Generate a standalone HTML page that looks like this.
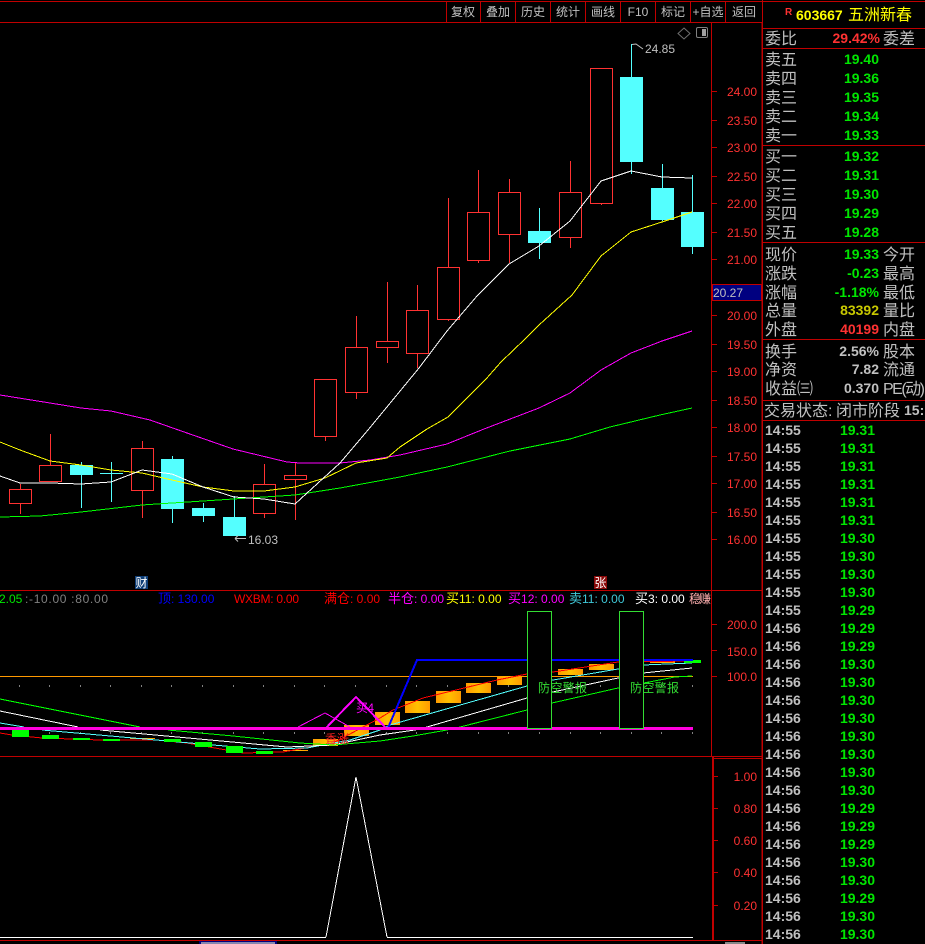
<!DOCTYPE html>
<html><head><meta charset="utf-8">
<style>
html,body{margin:0;padding:0;background:#000;width:925px;height:944px;overflow:hidden}
svg{display:block;font-family:"Liberation Sans","WenQuanYi Zen Hei","Noto Sans CJK SC",sans-serif}
.l{shape-rendering:crispEdges}
.tb{font-size:12px;fill:#c0c0c0;text-anchor:middle}
.ax{font-size:12px;fill:#ff3232;text-anchor:end}
.cn{font-size:16px;fill:#c0c0c0}
.g{font-size:14px;font-weight:bold;fill:#00e600;text-anchor:end}
.w{font-size:14px;font-weight:bold;fill:#c0c0c0;text-anchor:end}
.t{font-size:14px;font-weight:bold;fill:#c0c0c0}
.m{font-size:12px}
.c{font-size:13px}
</style></head><body>
<svg width="925" height="944" viewBox="0 0 925 944" xmlns="http://www.w3.org/2000/svg">
<rect width="925" height="944" fill="#000"/>
<!-- frame -->
<g class="l" stroke="#c00000" stroke-width="1" fill="none">
<path d="M0 1.500H925M0 22.500H762M0 590.500H762M0 756.500H762M712 758.500H762"/>
<path d="M446.500 2V22M480.500 2V22M515.500 2V22M550.500 2V22M585.500 2V22M620.500 2V22M655.500 2V22M690.500 2V22M725.500 2V22"/>
<path d="M711.500 22V756M762.500 0V944M0 940.500H762"/>
<path d="M763 28.500H925M763 48.500H925M763 145.500H925M763 242.500H925M763 339.500H925M763 400.500H925M763 420.500H925"/>
<path d="M712 91.500H717M712 120.500H717M712 147.500H717M712 176.500H717M712 203.500H717M712 232.500H717M712 259.500H717M712 315.500H717M712 344.500H717M712 371.500H717M712 400.500H717M712 427.500H717M712 456.500H717M712 483.500H717M712 512.500H717M712 539.500H717"/>
<path d="M712 624.500H717M712 650.500H717M712 676.500H717M713 776.500H718M713 808.500H718M713 840.500H718M713 872.500H718M713 905.500H718"/>
</g>
<rect class="l" x="712" y="757" width="2" height="183" fill="#c00000"/>
<path class="l" d="M762 22V944" stroke="#c00000" stroke-width="1" fill="none"/>
<!-- toolbar -->
<text class="tb" x="463" y="16">复权</text><text class="tb" x="498" y="16">叠加</text><text class="tb" x="533" y="16">历史</text><text class="tb" x="568" y="16">统计</text><text class="tb" x="603" y="16">画线</text><text class="tb" x="638" y="16">F10</text><text class="tb" x="673" y="16">标记</text><text class="tb" x="708" y="16">+自选</text><text class="tb" x="744" y="16">返回</text>
<!-- icons -->
<path d="M684 28L690 33.500L684 39L678 33.500Z" fill="none" stroke="#707070" stroke-width="1"/>
<rect x="696.500" y="27.500" width="11" height="10" rx="1.500" fill="none" stroke="#808080"/>
<rect x="702" y="29" width="4" height="7" fill="#a0a0a0"/>
<!-- candles -->
<g class="l" stroke="#ff3232" fill="none">
<path d="M20.500 484V489M20.500 503V514M50.500 434V465M142.500 441V448M142.500 490V518M264.500 464V484M264.500 513V518M295.500 462V475M295.500 479V520M325.500 436V441M356.500 316V347M356.500 392V399M387.500 282V341M387.500 347V363M417.500 285V310M417.500 353V368M448.500 198V267M448.500 319V321M478.500 170V212M478.500 260V263M509.500 179V192M509.500 234V263M570.500 161V192M570.500 237V248M601.500 203V205"/>
<rect x="9.500" y="489.500" width="22" height="14"/><rect x="39.500" y="465.500" width="22" height="16"/><rect x="131.500" y="448.500" width="22" height="42"/><rect x="253.500" y="484.500" width="22" height="29"/><rect x="284.500" y="475.500" width="22" height="4"/><rect x="314.500" y="379.500" width="22" height="57"/><rect x="345.500" y="347.500" width="22" height="45"/><rect x="376.500" y="341.500" width="22" height="6"/><rect x="406.500" y="310.500" width="22" height="43"/><rect x="437.500" y="267.500" width="22" height="52"/><rect x="467.500" y="212.500" width="22" height="48"/><rect x="498.500" y="192.500" width="22" height="42"/><rect x="559.500" y="192.500" width="22" height="45"/><rect x="590.500" y="68.500" width="22" height="135"/>
</g>
<g class="l" stroke="#54ffff" fill="none">
<path d="M81.500 462V508M111.500 462V502M100 473.500H123M172.500 456V523M203.500 503V522M234.500 496V517M539.500 208V259M631.500 44V174M662.500 164V221M692.500 175V254"/>
</g>
<g class="l" fill="#54ffff">
<rect x="70" y="465" width="23" height="10"/><rect x="161" y="459" width="23" height="50"/><rect x="192" y="508" width="23" height="8"/><rect x="223" y="517" width="23" height="19"/><rect x="528" y="231" width="23" height="12"/><rect x="620" y="77" width="23" height="85"/><rect x="651" y="188" width="23" height="32"/><rect x="681" y="212" width="23" height="35"/>
</g>
<!-- MAs -->
<g class="l" fill="none" stroke-width="1">
<polyline stroke="#ff00ff" points="0,395 50,403 81,408 111,411 150,420 187,433 233,449 287,462 300,463 340,463 370,460 400,455 447,444 484,429 539,408 570,393 601,370 631,353 662,341 692,331"/>
<polyline stroke="#00ff00" points="0,517 40,516 81,512 142,505 172,503 203,501 264,497 295,495 340,488 400,477 447,467 510,451 570,439 610,427 660,415 692,408"/>
<polyline stroke="#ffff00" points="0,442 20,450 50,461 81,465 111,470 142,473 172,480 203,487 234,491 264,491 295,487 325,478 356,463 387,458 400,447 427,429 448,417 463,402 486,379 501,362 525,339 539,325 572,295 601,256 631,232 662,222 692,212"/>
<polyline stroke="#ffffff" points="0,476 20,483 50,483 81,484 111,482 142,470 172,474 203,487 234,497 264,499 295,504 340,463 368,430 419,368 447,331 477,296 509,264 539,246 570,221 601,181 631,171 662,177 692,178"/>
</g>
<path class="l" d="M692.500 175V212" stroke="#54ffff"/>
<!-- annotations -->
<path d="M632 44.500L636 44L643 49" fill="none" stroke="#c0c0c0"/>
<text x="645" y="53" font-size="12" fill="#c0c0c0">24.85</text>
<path d="M246 538.500H235M235 538.500L238 535.500M235 538.500L238 541.500" fill="none" stroke="#c0c0c0"/>
<text x="248" y="544" font-size="12" fill="#c0c0c0">16.03</text>
<!-- axis labels -->
<text class="ax" x="757" y="96">24.00</text><text class="ax" x="757" y="125">23.50</text><text class="ax" x="757" y="152">23.00</text><text class="ax" x="757" y="181">22.50</text><text class="ax" x="757" y="208">22.00</text><text class="ax" x="757" y="237">21.50</text><text class="ax" x="757" y="264">21.00</text><text class="ax" x="757" y="320">20.00</text><text class="ax" x="757" y="349">19.50</text><text class="ax" x="757" y="376">19.00</text><text class="ax" x="757" y="405">18.50</text><text class="ax" x="757" y="432">18.00</text><text class="ax" x="757" y="461">17.50</text><text class="ax" x="757" y="488">17.00</text><text class="ax" x="757" y="517">16.50</text><text class="ax" x="757" y="544">16.00</text>
<rect class="l" x="712.500" y="284.500" width="49" height="16" fill="#000080" stroke="#c00000"/>
<text x="713" y="297" font-size="12" fill="#c0c0c0">20.27</text>
<!-- badges -->
<rect x="135" y="576" width="13" height="13" fill="#0f3f78"/><text x="135.500" y="587" font-size="12" fill="#fff">财</text>
<rect x="594" y="576" width="13" height="13" fill="#8a0a0a"/><text x="594.500" y="587" font-size="12" fill="#fff">张</text>
<!-- mid labels -->
<text class="m" x="-1" y="603" fill="#00e600">2.05</text>
<text class="m" x="25" y="603" fill="#808080" textLength="83">:-10.00 :80.00</text>
<text class="m" x="158" y="603" fill="#0000ff"><tspan class="c">顶</tspan>: 130.00</text>
<text class="m" x="234" y="603" fill="#ff0000" textLength="65">WXBM: 0.00</text>
<text class="m" x="324" y="603" fill="#ff0000"><tspan class="c">满仓</tspan>: 0.00</text>
<text class="m" x="388" y="603" fill="#ff00ff"><tspan class="c">半仓</tspan>: 0.00</text>
<text class="m" x="446" y="603" fill="#ffff00"><tspan class="c">买</tspan>11: 0.00</text>
<text class="m" x="508" y="603" fill="#ff00ff"><tspan class="c">买</tspan>12: 0.00</text>
<text class="m" x="569" y="603" fill="#40c8d8"><tspan class="c">卖</tspan>11: 0.00</text>
<text class="m" x="635" y="603" fill="#ffffff"><tspan class="c">买</tspan>3: 0.00</text>
<text class="m" x="689" y="603" fill="#ffb0b0" textLength="22">稳赚</text>
<text class="ax" x="757" y="629">200.0</text><text class="ax" x="757" y="656">150.0</text><text class="ax" x="757" y="681">100.0</text>
<text class="ax" x="757" y="781">1.00</text><text class="ax" x="757" y="813">0.80</text><text class="ax" x="757" y="845">0.60</text><text class="ax" x="757" y="877">0.40</text><text class="ax" x="757" y="910">0.20</text>
<!-- mid chart -->
<g class="l" stroke="#808080" stroke-width="1">
<path d="M19.500 685V687M49.500 685V687M80.500 685V687M110.500 685V687M141.500 685V687M171.500 685V687M202.500 685V687M233.500 685V687M263.500 685V687M294.500 685V687M324.500 685V687M355.500 685V687M386.500 685V687M416.500 685V687M447.500 685V687M478.500 685V687M508.500 685V687M539.500 685V687M570.500 685V687M600.500 685V687M631.500 685V687M661.500 685V687M692.500 685V687"/>
<path d="M19.500 732V734M49.500 732V734M80.500 732V734M110.500 732V734M141.500 732V734M171.500 732V734M202.500 732V734M233.500 732V734M263.500 732V734M294.500 732V734M324.500 732V734M355.500 732V734M386.500 732V734M416.500 732V734M447.500 732V734M478.500 732V734M508.500 732V734M539.500 732V734M570.500 732V734M600.500 732V734M631.500 732V734M661.500 732V734M692.500 732V734"/>
</g>
<defs><linearGradient id="og" x1="0" x2="1" y1="0" y2="0"><stop offset="0" stop-color="#ff9a00"/><stop offset=".5" stop-color="#ffc000"/><stop offset="1" stop-color="#ff9a00"/></linearGradient></defs>
<rect class="l" x="0" y="676" width="693" height="1" fill="#ff9900"/>
<g fill="url(#og)" class="l">
<rect x="130" y="738" width="25" height="1"/><rect x="283" y="750" width="25" height="1"/><rect x="313" y="739" width="25" height="7"/><rect x="344" y="725" width="25" height="11"/><rect x="375" y="712" width="25" height="13"/><rect x="405" y="701" width="25" height="12"/><rect x="436" y="691" width="25" height="12"/><rect x="466" y="683" width="25" height="10"/><rect x="497" y="676" width="25" height="9"/><rect x="558" y="669" width="25" height="6"/><rect x="589" y="664" width="25" height="6"/><rect x="650" y="661" width="25" height="2"/>
</g>
<g class="l" fill="none" stroke-width="1">
<polyline stroke="#ff0000" points="0,733 12,735 42,738 100,740 157,740 187,743 243,753 283,752 333,743 380,718 393,710 423,698 497,680 527,674 553,672 618,662 692,661"/>
<polyline stroke="#54ffff" points="0,723 24,727"/>
<polyline stroke="#54ffff" points="42,730 213,745 260,749 307,748 350,740 380,730 390,725 527,686 553,680 618,669 643,665 692,663"/>
<polyline stroke="#ffffff" points="0,711 78,727"/>
<polyline stroke="#ffffff" points="100,730 287,747 333,745 380,735 415,730 427,727 527,698 553,692 618,678 643,673 692,668"/>
<polyline stroke="#00ff00" points="0,699 140,727"/>
<polyline stroke="#00ff00" points="168,730 233,736 300,743 333,745 380,741 413,736 447,730 460,727 527,710 552,703 618,688 675,677 692,676"/>
<polyline stroke="#ff00ff" points="298,727 325,713 350,727"/>
</g>
<g fill="#00ff00" class="l">
<rect x="12" y="730" width="17" height="7"/><rect x="42" y="735" width="17" height="4"/><rect x="73" y="738" width="17" height="2"/><rect x="103" y="739" width="17" height="2"/><rect x="164" y="739" width="17" height="3"/><rect x="195" y="742" width="17" height="5"/><rect x="226" y="746" width="17" height="7"/><rect x="256" y="751" width="17" height="3"/><rect x="684" y="660" width="17" height="3"/>
</g>
<polyline class="l" fill="none" stroke="#0000ff" stroke-width="2" points="388,728 417,660 693,660"/>
<polyline class="l" fill="none" stroke="#ff00ff" stroke-width="2" points="326,728 356,697 386,728"/>
<rect class="l" x="0" y="727" width="693" height="3" fill="#ff00dd"/>
<rect class="l" x="527.500" y="611.500" width="24" height="117" fill="#000" stroke="#33dd33"/>
<rect class="l" x="619.500" y="611.500" width="24" height="117" fill="#000" stroke="#33dd33"/>
<text x="538" y="692" font-size="12" fill="#33dd33" textLength="49">防空警报</text>
<text x="630" y="692" font-size="12" fill="#33dd33" textLength="49">防空警报</text>
<text x="356" y="712" font-size="12" fill="#ff00ff" textLength="18">买4</text>
<text x="325" y="743" font-size="12" fill="#ff2020" textLength="24">香涨</text>
<!-- lower chart -->
<polyline class="l" fill="none" stroke="#fff" stroke-width="1" points="326,937 356,777 387,937"/>
<rect class="l" x="0" y="937" width="326" height="1" fill="#fff"/><rect class="l" x="387" y="937" width="306" height="1" fill="#fff"/>
<rect class="l" x="199" y="941" width="78" height="3" fill="#000080"/>
<rect class="l" x="201" y="942" width="74" height="2" fill="#c0c0c0" opacity=".7"/>
<rect class="l" x="725" y="942" width="20" height="2" fill="#c0c0c0" opacity=".7"/>
<!-- header -->
<text x="785" y="15" font-size="10" font-weight="bold" fill="#ff3232">R</text>
<text x="796" y="20" font-size="14" font-weight="bold" fill="#ffff00">603667</text>
<text x="848" y="20" font-size="16" fill="#ffff00">五洲新春</text>
<text class="cn" x="765" y="44">委比</text>
<text x="880" y="43" class="w" style="fill:#ff3232">29.42%</text>
<text class="cn" x="883" y="44">委差</text>
<!-- quotes -->
<text class="cn" x="765" y="65">卖五</text><text class="g" x="879" y="64">19.40</text>
<text class="cn" x="765" y="84">卖四</text><text class="g" x="879" y="83">19.36</text>
<text class="cn" x="765" y="103">卖三</text><text class="g" x="879" y="102">19.35</text>
<text class="cn" x="765" y="122">卖二</text><text class="g" x="879" y="121">19.34</text>
<text class="cn" x="765" y="141">卖一</text><text class="g" x="879" y="140">19.33</text>
<text class="cn" x="765" y="162">买一</text><text class="g" x="879" y="161">19.32</text>
<text class="cn" x="765" y="181">买二</text><text class="g" x="879" y="180">19.31</text>
<text class="cn" x="765" y="200">买三</text><text class="g" x="879" y="199">19.30</text>
<text class="cn" x="765" y="219">买四</text><text class="g" x="879" y="218">19.29</text>
<text class="cn" x="765" y="238">买五</text><text class="g" x="879" y="237">19.28</text>
<text class="cn" x="765" y="260">现价</text><text class="g" x="879" y="259">19.33</text><text class="cn" x="883" y="260">今开</text>
<text class="cn" x="765" y="279">涨跌</text><text class="g" x="879" y="278">-0.23</text><text class="cn" x="883" y="279">最高</text>
<text class="cn" x="765" y="298">涨幅</text><text class="g" x="879" y="297">-1.18%</text><text class="cn" x="883" y="298">最低</text>
<text class="cn" x="765" y="316">总量</text><text class="w" x="879" y="315" style="fill:#c8c800">83392</text><text class="cn" x="883" y="316">量比</text>
<text class="cn" x="765" y="335">外盘</text><text class="w" x="879" y="334" style="fill:#ff3232">40199</text><text class="cn" x="883" y="335">内盘</text>
<text class="cn" x="765" y="357">换手</text><text class="w" x="879" y="356">2.56%</text><text class="cn" x="883" y="357">股本</text>
<text class="cn" x="765" y="375">净资</text><text class="w" x="879" y="374">7.82</text><text class="cn" x="883" y="375">流通</text>
<text class="cn" x="765" y="394">收益㈢</text><text class="w" x="879" y="393">0.370</text><text class="cn" x="883" y="394" textLength="42">PE(动)</text>
<text class="cn" x="764" y="416">交易状态:</text><text class="cn" x="836" y="416">闭市阶段</text><text class="t" x="904" y="415">15:</text>
<!-- ticks -->
<text class="t" x="765" y="435">14:55</text><text class="g" x="875" y="435">19.31</text>
<text class="t" x="765" y="453">14:55</text><text class="g" x="875" y="453">19.31</text>
<text class="t" x="765" y="471">14:55</text><text class="g" x="875" y="471">19.31</text>
<text class="t" x="765" y="489">14:55</text><text class="g" x="875" y="489">19.31</text>
<text class="t" x="765" y="507">14:55</text><text class="g" x="875" y="507">19.31</text>
<text class="t" x="765" y="525">14:55</text><text class="g" x="875" y="525">19.31</text>
<text class="t" x="765" y="543">14:55</text><text class="g" x="875" y="543">19.30</text>
<text class="t" x="765" y="561">14:55</text><text class="g" x="875" y="561">19.30</text>
<text class="t" x="765" y="579">14:55</text><text class="g" x="875" y="579">19.30</text>
<text class="t" x="765" y="597">14:55</text><text class="g" x="875" y="597">19.30</text>
<text class="t" x="765" y="615">14:55</text><text class="g" x="875" y="615">19.29</text>
<text class="t" x="765" y="633">14:56</text><text class="g" x="875" y="633">19.29</text>
<text class="t" x="765" y="651">14:56</text><text class="g" x="875" y="651">19.29</text>
<text class="t" x="765" y="669">14:56</text><text class="g" x="875" y="669">19.30</text>
<text class="t" x="765" y="687">14:56</text><text class="g" x="875" y="687">19.30</text>
<text class="t" x="765" y="705">14:56</text><text class="g" x="875" y="705">19.30</text>
<text class="t" x="765" y="723">14:56</text><text class="g" x="875" y="723">19.30</text>
<text class="t" x="765" y="741">14:56</text><text class="g" x="875" y="741">19.30</text>
<text class="t" x="765" y="759">14:56</text><text class="g" x="875" y="759">19.30</text>
<text class="t" x="765" y="777">14:56</text><text class="g" x="875" y="777">19.30</text>
<text class="t" x="765" y="795">14:56</text><text class="g" x="875" y="795">19.30</text>
<text class="t" x="765" y="813">14:56</text><text class="g" x="875" y="813">19.29</text>
<text class="t" x="765" y="831">14:56</text><text class="g" x="875" y="831">19.29</text>
<text class="t" x="765" y="849">14:56</text><text class="g" x="875" y="849">19.29</text>
<text class="t" x="765" y="867">14:56</text><text class="g" x="875" y="867">19.30</text>
<text class="t" x="765" y="885">14:56</text><text class="g" x="875" y="885">19.30</text>
<text class="t" x="765" y="903">14:56</text><text class="g" x="875" y="903">19.29</text>
<text class="t" x="765" y="921">14:56</text><text class="g" x="875" y="921">19.30</text>
<text class="t" x="765" y="939">14:56</text><text class="g" x="875" y="939">19.30</text>
</svg>
</body></html>
